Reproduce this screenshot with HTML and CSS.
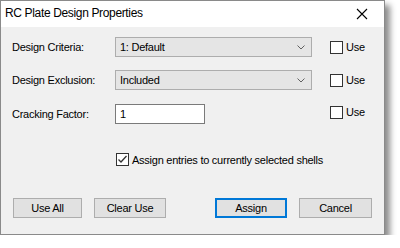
FILE: index.html
```html
<!DOCTYPE html>
<html>
<head>
<meta charset="utf-8">
<link rel="stylesheet" href="styles.css">
</head>
<body>
<div class="dialog">
  <div class="titlebar">
    <span class="title">RC Plate Design Properties</span>
    <svg class="close" width="12" height="12" viewBox="0 0 12 12"><path d="M1 1 L11 11 M11 1 L1 11" stroke="#000" stroke-width="1.1" fill="none"/></svg>
  </div>
  <div class="content">
    <div class="form">
      <div class="label r1">Design Criteria:</div>
      <div class="combo r1"><span>1: Default</span><svg class="chev" width="8" height="5" viewBox="0 0 8 5"><path d="M0.5 0.5 L4 4 L7.5 0.5" stroke="#606060" fill="none"/></svg></div>
      <label class="use r1"><span class="box"></span>Use</label>

      <div class="label r2">Design Exclusion:</div>
      <div class="combo r2"><span>Included</span><svg class="chev" width="8" height="5" viewBox="0 0 8 5"><path d="M0.5 0.5 L4 4 L7.5 0.5" stroke="#606060" fill="none"/></svg></div>
      <label class="use r2"><span class="box"></span>Use</label>

      <div class="label r3">Cracking Factor:</div>
      <div class="textbox r3">1</div>
      <label class="use r3 up"><span class="box"></span>Use</label>
    </div>
    <label class="assign-check"><span class="box checked"><svg width="11" height="11" viewBox="0 0 11 11"><path d="M1.5 5.5 L4 8 L9.5 2" stroke="#333" stroke-width="1.3" fill="none"/></svg></span>Assign entries to currently selected shells</label>
    <div class="buttons">
      <div class="group">
        <div class="btn w69">Use All</div>
        <div class="btn w72">Clear Use</div>
      </div>
      <div class="group">
        <div class="btn w72 default">Assign</div>
        <div class="btn w73">Cancel</div>
      </div>
    </div>
  </div>
</div>
</body>
</html>
```
FILE: styles.css
```css
html, body {
  margin: 0;
  padding: 0;
  background: #ffffff;
}
body {
  font-family: "Liberation Sans", Arial, sans-serif;
  font-size: 11px;
  letter-spacing: -0.25px;
  color: #000;
}
.dialog {
  width: 383px;
  height: 233px;
  border: 1px solid #8a8a8a;
  background: #f0f0f0;
  box-shadow: 5px 5px 6px rgba(0, 0, 0, 0.45);
}
.titlebar {
  height: 26px;
  background: #ffffff;
  display: flex;
  align-items: center;
  justify-content: space-between;
  padding: 0 16px 0 4px;
}
.title {
  font-size: 12px;
  letter-spacing: -0.35px;
  font-family: "Liberation Sans", Arial, sans-serif;
  color: #000;
  position: relative;
  top: -1px;
}
.close {
  display: block;
}
.content {
  padding: 10px 0 0 11px;
}
.form {
  display: grid;
  grid-template-columns: 103px 197px auto;
  grid-template-rows: 20px 20px 22px;
  row-gap: 13px;
  column-gap: 0;
  align-items: center;
}
.label {
  line-height: 13px;
}
.combo {
  height: 18px;
  border: 1px solid #adadad;
  background: #e5e5e5;
  display: flex;
  align-items: center;
  justify-content: space-between;
  padding: 0 5px 0 4px;
  box-sizing: content-box;
  width: 186px;
}
.combo span {
  line-height: 13px;
}
.chev {
  display: block;
  margin-right: 1px;
}
.textbox {
  height: 20px;
  border: 1px solid #7a7a7a;
  background: #fff;
  box-sizing: border-box;
  width: 90px;
  padding-left: 4px;
  line-height: 19px;
}
.use {
  display: flex;
  align-items: center;
  gap: 3px;
  margin-left: 18px;
}
.use.up {
  position: relative;
  top: -2px;
}
.box {
  width: 11px;
  height: 11px;
  border: 1px solid #333;
  background: #fff;
  display: inline-flex;
  align-items: center;
  justify-content: center;
}
.assign-check {
  display: flex;
  align-items: center;
  gap: 3px;
  margin: 28px 0 0 104px;
  height: 13px;
}
.buttons {
  display: flex;
  justify-content: space-between;
  margin: 32px 0 0 1px;
  width: 359px;
}
.group {
  display: flex;
  gap: 12px;
}
.btn {
  height: 20px;
  border: 1px solid #adadad;
  background: #e1e1e1;
  box-sizing: border-box;
  display: flex;
  align-items: center;
  justify-content: center;
  font-size: 11px;
}
.btn.default {
  border: 2px solid #0078d7;
}
.w69 { width: 69px; }
.w72 { width: 72px; }
.w73 { width: 73px; }
```
